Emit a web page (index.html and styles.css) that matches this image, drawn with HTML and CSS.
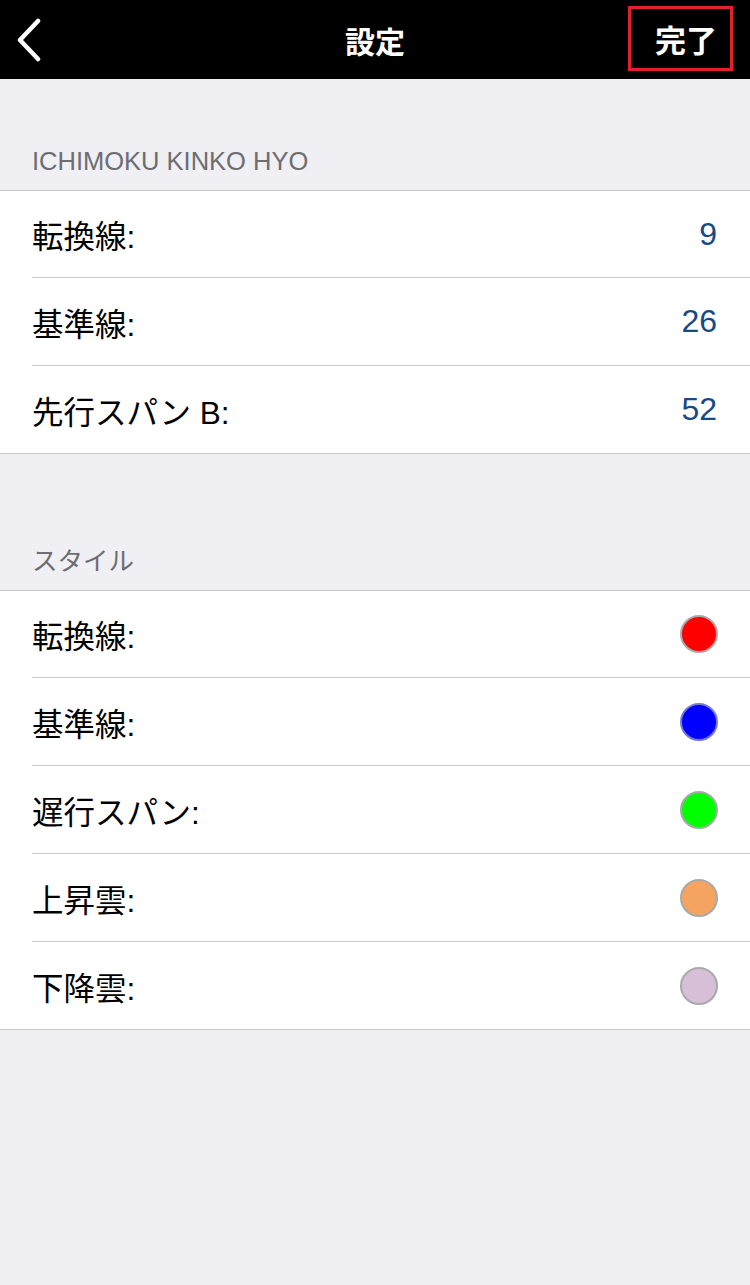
FILE: index.html
```html
<!DOCTYPE html>
<html lang="ja">

<head>
    <meta charset="UTF-8">
    <meta name="viewport" content="width=device-width, initial-scale=1.0">
    <title>設定</title>
    <link rel="stylesheet" href="styles.css">
</head>

<body>
    <!-- Navigation bar -->
    <header class="nav-bar">
        <div class="nav-left">
            <svg class="back-icon" width="28" height="44" viewBox="0 0 28 44">
                <path d="M22 3 L4 22 L22 41" fill="none" stroke="#fff" stroke-width="4.5" stroke-linecap="round" stroke-linejoin="round"/>
            </svg>
        </div>
        <div class="nav-title">設定</div>
        <div class="nav-right">
            <span class="done-btn">完了</span>
        </div>
    </header>

    <!-- Parameters -->
    <div class="section-title first">ICHIMOKU KINKO HYO</div>
    <ul class="group">
        <li class="row"><span class="label">転換線:</span><span class="value">9</span></li>
        <li class="row"><span class="label">基準線:</span><span class="value">26</span></li>
        <li class="row"><span class="label">先行スパン B:</span><span class="value">52</span></li>
    </ul>

    <!-- Line styles -->
    <div class="section-title">スタイル</div>
    <ul class="group">
        <li class="row"><span class="label">転換線:</span><span class="swatch red"></span></li>
        <li class="row"><span class="label">基準線:</span><span class="swatch blue"></span></li>
        <li class="row"><span class="label">遅行スパン:</span><span class="swatch green"></span></li>
        <li class="row"><span class="label">上昇雲:</span><span class="swatch orange"></span></li>
        <li class="row"><span class="label">下降雲:</span><span class="swatch lilac"></span></li>
    </ul>
</body>

</html>
```

FILE: styles.css
```css
body {
    font-family: "Liberation Sans", "Noto Sans CJK JP", sans-serif;
    background-color: #efeff4;
    margin: 0;
    padding: 0;
}

.nav-bar {
    height: 79px;
    background-color: #000;
    display: grid;
    grid-template-columns: 1fr auto 1fr;
    align-items: center;
    color: #fff;
}

.nav-left {
    padding-left: 16px;
    display: flex;
    align-items: center;
}

.nav-title {
    font-family: "Noto Sans CJK JP", sans-serif;
    font-size: 30px;
    font-weight: bold;
}

.nav-right {
    display: flex;
    justify-content: flex-end;
    padding-right: 17px;
}

.done-btn {
    font-family: "Noto Sans CJK JP", sans-serif;
    font-size: 31px;
    font-weight: bold;
    border: 3px solid #e3202b;
    height: 59px;
    width: 86px;
    padding-right: 13px;
    box-sizing: content-box;
    display: flex;
    align-items: center;
    justify-content: flex-end;
    margin-top: -2px;
}

.section-title {
    font-size: 25.5px;
    line-height: 30px;
    color: #6d6d72;
    padding: 92px 32px 14px;
}

.section-title.first {
    padding-top: 67px;
}

.group {
    list-style: none;
    margin: 0;
    padding: 0 0 0 32px;
    background-color: #fff;
    border-top: 1px solid #c8c7cc;
    border-bottom: 1px solid #c8c7cc;
}

.row {
    height: 87px;
    display: flex;
    align-items: center;
    justify-content: space-between;
    padding-right: 33px;
    border-bottom: 1px solid #c8c7cc;
}

.row:first-child {
    height: 86px;
}

.row:last-child {
    border-bottom: none;
}

.label {
    font-size: 31.5px;
    color: #000;
}

.value {
    font-size: 32px;
    color: #164a85;
}

.swatch {
    width: 34px;
    height: 34px;
    border-radius: 50%;
    border: 2px solid #a9a9a9;
    margin-right: -1px;
}

.red {
    background-color: #ff0000;
}

.blue {
    background-color: #0000ff;
    border-color: #7878d8;
}

.green {
    background-color: #00ff00;
}

.orange {
    background-color: #f4a460;
}

.lilac {
    background-color: #d8bfd8;
}
```
